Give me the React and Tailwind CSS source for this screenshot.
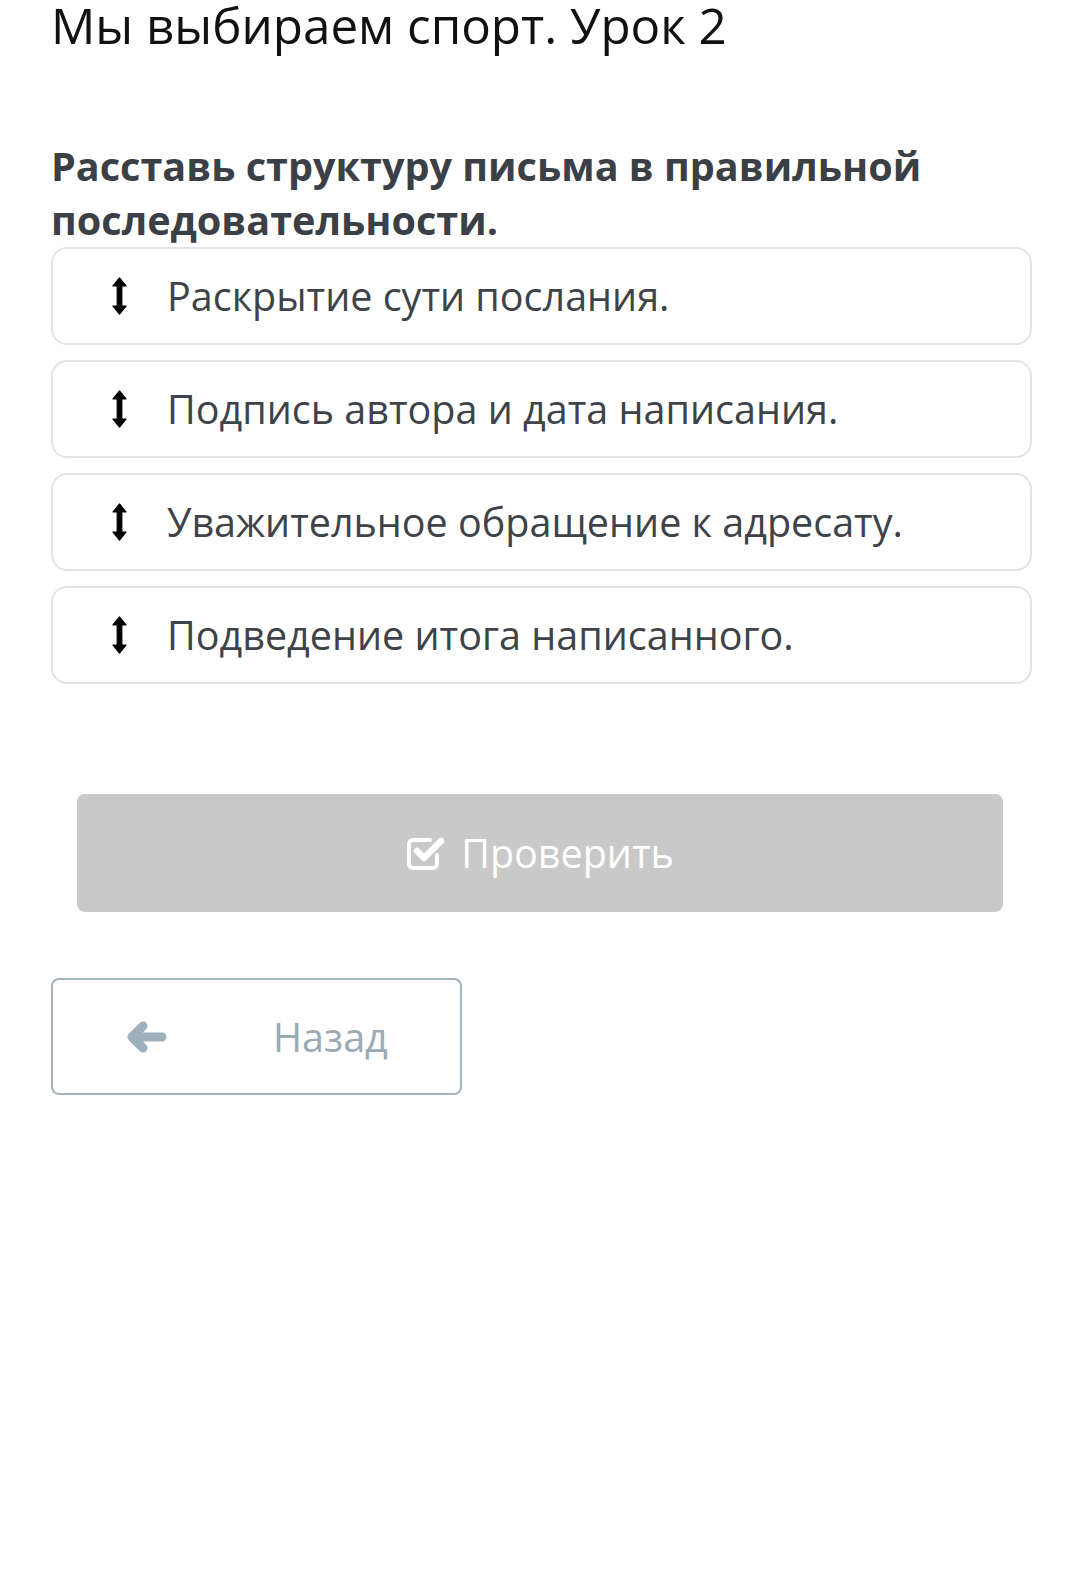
import React from 'react'

const items = [
  'Раскрытие сути послания.',
  'Подпись автора и дата написания.',
  'Уважительное обращение к адресату.',
  'Подведение итога написанного.',
]

function UpDown(){
  return (
    <svg width="15" height="38" viewBox="0 0 15 38" className="shrink-0">
      <path d="M7.5 1 L14 9 H9.8 V29 H14 L7.5 37 L1 29 H5.2 V9 H1 Z" fill="#000" stroke="#000" strokeWidth="1.2" strokeLinejoin="round" />
    </svg>
  )
}

function CheckSquare(){
  return (
    <svg width="41" height="36" viewBox="0 0 41 36" className="shrink-0">
      <path d="M31 20 V29 a4 4 0 0 1 -4 4 H7 a4 4 0 0 1 -4 -4 V9 a4 4 0 0 1 4 -4 H24" fill="none" stroke="#fff" strokeWidth="4" strokeLinecap="round" />
      <path d="M11 16 L18 23 L35 6" fill="none" stroke="#fff" strokeWidth="6.5" strokeLinecap="round" strokeLinejoin="round" />
    </svg>
  )
}

function ArrowLeft(){
  return (
    <svg width="40" height="32" viewBox="0 0 40 32" className="shrink-0">
      <path d="M16 5 L5 16 L16 27 M5 16 H35" fill="none" stroke="#9eb0bb" strokeWidth="9" strokeLinecap="round" strokeLinejoin="round" />
    </svg>
  )
}

export default function App(){
  return (
    <div className="min-h-[1584px] bg-white px-[51px] font-['Open_Sans',sans-serif]">
      {/* title is cut at the top in the screenshot */}
      <h1 className="-mt-[4px] text-[49.3px] leading-[58px] text-[#111] font-normal whitespace-nowrap">Мы выбираем спорт. Урок 2</h1>

      <h2 className="mt-[85px] text-[39.6px] leading-[54px] font-bold text-[#3b4046]">
        Расставь структуру письма в правильной последовательности.
      </h2>

      <div className="flex flex-col gap-[15px] w-[981px]">
        {items.map((t,i)=> (
          <div key={i} className="h-[98px] border-2 border-[#e1e4e6] rounded-[16px] flex items-center pl-[59px]">
            <UpDown />
            <span className="ml-[40px] text-[39.5px] leading-[50px] text-[#3d4349]">{t}</span>
          </div>
        ))}
      </div>

      <div className="mt-[110px] ml-[26px] w-[926px] h-[118px] bg-[#c9c9c9] rounded-[8px] flex items-center justify-center gap-[14px]">
        <CheckSquare />
        <span className="text-[39.5px] leading-[50px] text-white">Проверить</span>
      </div>

      <div className="mt-[66px] w-[411px] h-[117px] border-2 border-[#a3b3bc] rounded-[8px] flex items-center">
        <span className="ml-[74px]"><ArrowLeft /></span>
        <span className="ml-[106px] text-[39.5px] leading-[50px] text-[#9aabb6]">Назад</span>
      </div>
    </div>
  )
}
